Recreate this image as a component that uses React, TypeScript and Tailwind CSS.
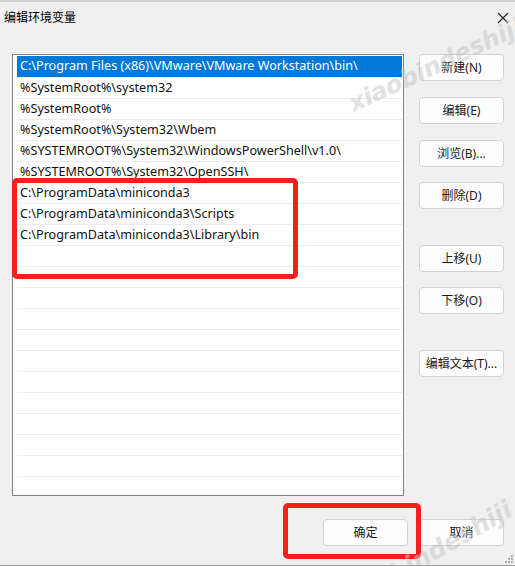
import React from "react";

const rows = [
  "C:\\Program Files (x86)\\VMware\\VMware Workstation\\bin\\",
  "%SystemRoot%\\system32",
  "%SystemRoot%",
  "%SystemRoot%\\System32\\Wbem",
  "%SYSTEMROOT%\\System32\\WindowsPowerShell\\v1.0\\",
  "%SYSTEMROOT%\\System32\\OpenSSH\\",
  "C:\\ProgramData\\miniconda3",
  "C:\\ProgramData\\miniconda3\\Scripts",
  "C:\\ProgramData\\miniconda3\\Library\\bin",
];

const FONT = { fontFamily: "'Noto Sans', 'Noto Sans CJK SC', sans-serif" };

function Btn({ label, className = "" }: { label: string; className?: string }) {
  return (
    <div
      className={`w-[85px] h-[27px] flex items-center justify-center rounded-[4px] border border-[#d3d3d3] bg-[#fdfdfd] text-[12px] text-[#1a1a1a] ${className}`}
    >
      {label}
    </div>
  );
}

export default function App() {
  const empty = Array.from({ length: 12 });
  return (
    <div
      className="relative w-[515px] h-[566px] bg-[#f0f0f0] border-t-2 border-[#cfcfcf] border-b border-b-[#a0a0a0] overflow-hidden"
      style={FONT}
    >
      {/* title bar */}
      <div className="h-[30px] flex items-center justify-between pl-[4px] pr-[6px]">
        <span className="text-[12px] text-black" style={{ fontFamily: "'Noto Sans CJK SC', sans-serif" }}>编辑环境变量</span>
        <svg width="12" height="12" viewBox="0 0 12 12" className="mt-[2px]">
          <path d="M1 1 L11 11 M11 1 L1 11" stroke="#222" strokeWidth="1.1" />
        </svg>
      </div>

      {/* main */}
      <div className="flex pl-[12px] pt-[22px]">
        <div className="w-[392px] h-[442px] border border-[#838383] bg-white overflow-hidden pt-[1px] pl-[4px] pr-[1px]">
          {rows.map((r, i) => (
            <div
              key={i}
              className={`h-[21px] flex items-center pl-[3px] text-[12.6px] whitespace-nowrap ${
                i === 0 ? "bg-[#0078d7] text-white" : "text-[#111] border-t border-[#ececec]"
              }`}
            >
              {r}
            </div>
          ))}
          {empty.map((_, i) => (
            <div key={"e" + i} className="h-[21px] border-t border-[#ececec]" />
          ))}
        </div>
        <div className="ml-[15px] flex flex-col">
          <Btn label="新建(N)" className="mt-[0px]" />
          <Btn label="编辑(E)" className="mt-[16px]" />
          <Btn label="浏览(B)..." className="mt-[16px]" />
          <Btn label="删除(D)" className="mt-[15px]" />
          <Btn label="上移(U)" className="mt-[36px]" />
          <Btn label="下移(O)" className="mt-[15px]" />
          <Btn label="编辑文本(T)..." className="mt-[36px]" />
        </div>
      </div>

      {/* bottom buttons */}
      <div className="flex justify-end gap-[11px] pr-[11px] mt-[23px]">
        <Btn label="确定" className="border-[#25598c]" />
        <Btn label="取消" />
      </div>

      {/* resize grip */}
      <div className="absolute right-[2px] bottom-[2px] grid grid-cols-3 gap-[1px]">
        {[0, 0, 1, 0, 1, 1, 1, 1, 1].map((v, i) => (
          <div key={i} className={`w-[2px] h-[2px] ${v ? "bg-[#b0b0b0]" : ""}`} />
        ))}
      </div>

      {/* red highlight boxes */}
      <div className="absolute left-[12px] top-[176px] w-[286px] h-[101px] border-[5px] border-[#f5201b] rounded-[5px]" />
      <div className="absolute left-[283px] top-[501px] w-[138px] h-[56px] border-[5px] border-[#f5201b] rounded-[5px]" />

      {/* watermarks */}
      <div
        className="absolute left-[350px] top-[85px] text-[24px] font-bold italic text-[#c4c4c4] opacity-50 whitespace-nowrap origin-left"
        style={{ transform: "rotate(-25deg)", fontFamily: "'DejaVu Sans', sans-serif" }}
      >
        xiaobindeshiji
      </div>
      <div
        className="absolute left-[340px] top-[585px] text-[25px] font-bold italic text-[#c4c4c4] opacity-50 whitespace-nowrap origin-left"
        style={{ transform: "rotate(-30deg)", fontFamily: "'DejaVu Sans', sans-serif" }}
      >
        xiaobindeshiji
      </div>
    </div>
  );
}
